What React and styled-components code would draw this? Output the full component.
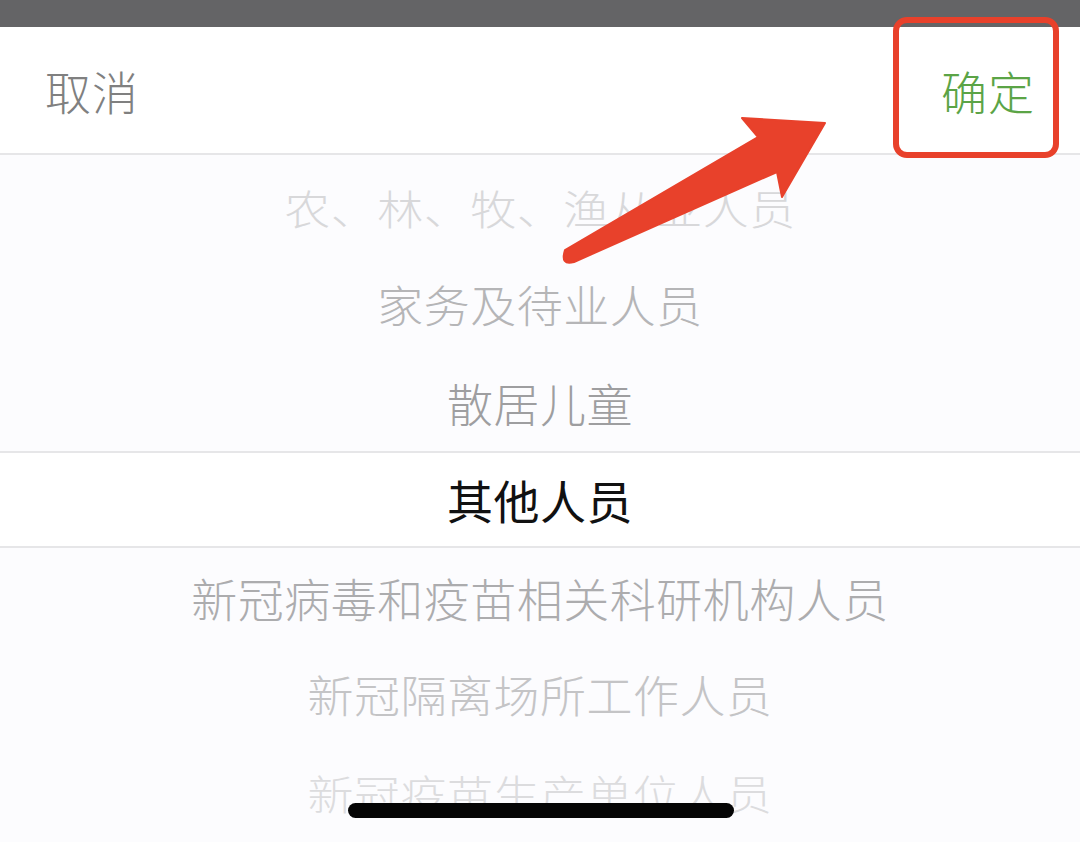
import React from "react";
import styled, { createGlobalStyle } from "styled-components";

const GlobalStyle = createGlobalStyle`
  html, body {
    margin: 0;
    padding: 0;
    background: #ffffff;
  }
  body {
    font-family: "Noto Sans CJK SC", "Noto Sans", sans-serif;
  }
`;

const Screen = styled.div`
  position: relative;
  width: 1080px;
  height: 842px;
  overflow: hidden;
  display: flex;
  flex-direction: column;
  background: #fcfcfe;
`;

const StatusStrip = styled.div`
  height: 27px;
  background: #646466;
  flex-shrink: 0;
`;

const Toolbar = styled.div`
  height: 128px;
  flex-shrink: 0;
  display: flex;
  align-items: center;
  justify-content: space-between;
  padding: 0 45px;
  background: #ffffff;
  border-bottom: 2px solid #e6e6e8;
  box-sizing: border-box;
`;

const ToolButton = styled.span`
  font-size: 46px;
  font-weight: 300;
  line-height: 1;
  color: ${(p) => (p.$primary ? "#5ba446" : "#808080")};
  letter-spacing: 1px;
`;

const Wheel = styled.div`
  display: flex;
  flex-direction: column;
  padding-top: 3px;
`;

const Row = styled.div`
  height: 97.5px;
  flex-shrink: 0;
  display: flex;
  align-items: center;
  justify-content: center;
  box-sizing: border-box;
  background: ${(p) => (p.$selected ? "#ffffff" : "transparent")};
  border-top: ${(p) => (p.$selected ? "2px solid #e6e6e8" : "none")};
  border-bottom: ${(p) => (p.$selected ? "2px solid #e6e6e8" : "none")};
`;

const Label = styled.span`
  font-size: 46px;
  font-weight: ${(p) => (p.$selected ? 400 : 300)};
  line-height: 1;
  color: ${(p) => p.$color};
  transform: scaleY(${(p) => p.$squash});
  letter-spacing: 0.5px;
`;

const Highlight = styled.div`
  position: absolute;
  left: 893px;
  top: 17px;
  width: 166px;
  height: 141px;
  border: 6px solid #e8412b;
  border-radius: 14px;
  box-sizing: border-box;
`;

const ArrowLayer = styled.svg`
  position: absolute;
  left: 0;
  top: 0;
  pointer-events: none;
`;

const HomeBar = styled.div`
  position: absolute;
  left: 348px;
  top: 803px;
  width: 386px;
  height: 15px;
  border-radius: 8px;
  background: #050505;
`;

const items = [
  { text: "农、林、牧、渔从业人员", color: "#d8d8da", squash: 0.88 },
  { text: "家务及待业人员", color: "#b5b5b7", squash: 0.97 },
  { text: "散居儿童", color: "#9e9ea0", squash: 1 },
  { text: "其他人员", color: "#111111", squash: 1, selected: true },
  { text: "新冠病毒和疫苗相关科研机构人员", color: "#acacae", squash: 1 },
  { text: "新冠隔离场所工作人员", color: "#c4c4c6", squash: 0.97 },
  { text: "新冠疫苗生产单位人员", color: "#dcdcde", squash: 0.88 },
];

export default function App() {
  return (
    <>
      <GlobalStyle />
      <Screen>
        <StatusStrip />
        <Toolbar>
          <ToolButton>取消</ToolButton>
          <ToolButton $primary>确定</ToolButton>
        </Toolbar>
        <Wheel>
          {items.map((item) => (
            <Row key={item.text} $selected={item.selected}>
              <Label $color={item.color} $squash={item.squash} $selected={item.selected}>
                {item.text}
              </Label>
            </Row>
          ))}
        </Wheel>
        <ArrowLayer width="1080" height="842" viewBox="0 0 1080 842">
          <path
            d="M565 250 L758 137 L742 118 L825 123 L782 197 L777 172 L574 262 Q560 266 565 250 Z"
            fill="#e8412b"
            stroke="#e8412b"
            strokeWidth="2"
            strokeLinejoin="round"
          />
        </ArrowLayer>
        <Highlight />
        <HomeBar />
      </Screen>
    </>
  );
}
